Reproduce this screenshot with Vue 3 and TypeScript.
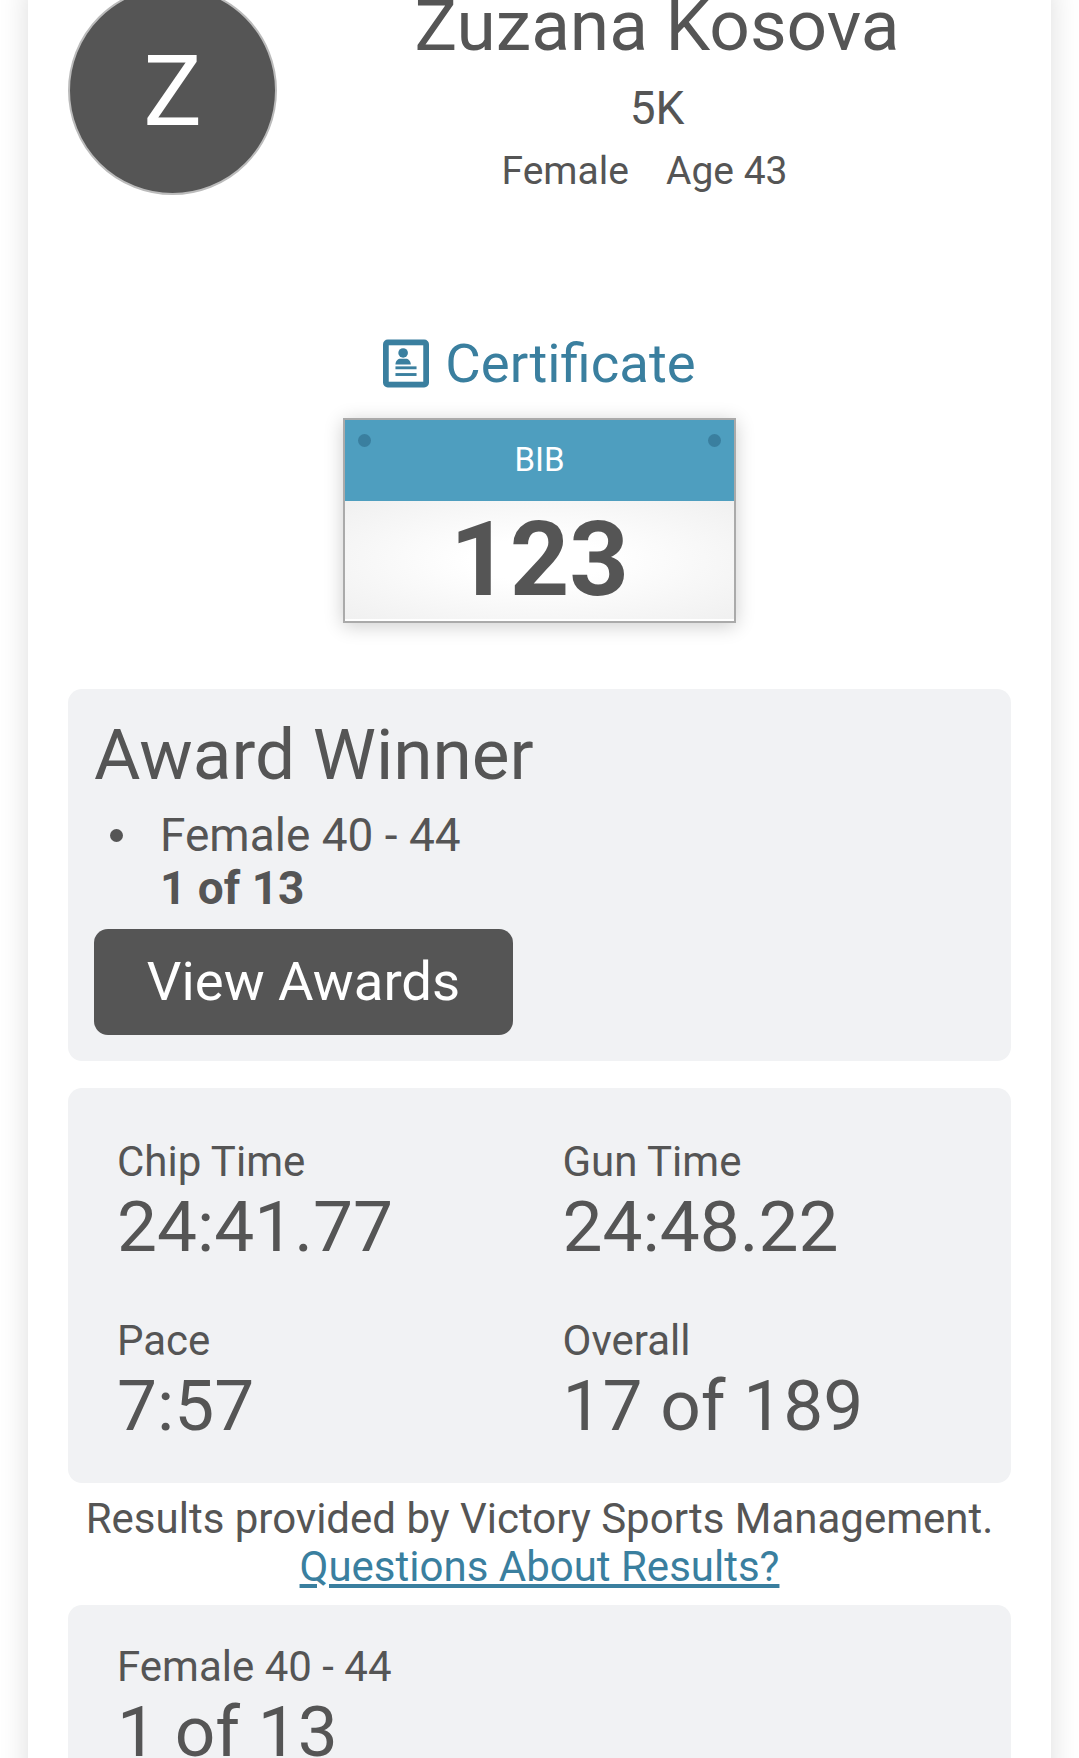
<script setup lang="ts">
interface Stat {
  label: string;
  value: string;
}

// chip/gun/pace/place numbers for this runner
const stats: Stat[] = [
  { label: "Chip Time", value: "24:41.77" },
  { label: "Gun Time", value: "24:48.22" },
  { label: "Pace", value: "7:57" },
  { label: "Overall", value: "17 of 189" },
];

const divisionStats: Stat[] = [{ label: "Female 40 - 44", value: "1 of 13" }];
</script>

<template>
  <div class="page">
    <div class="card">
      <div class="hero">
        <div class="avatar_cell">
          <div class="avatar">Z</div>
        </div>
        <div class="runner">
          <h1 class="runner_name">Zuzana Kosova</h1>
          <div class="runner_race">5K</div>
          <div class="runner_meta">
            <span>Female</span>
            <span>Age 43</span>
          </div>
        </div>
      </div>

      <a class="certificate" href="#">
        <svg class="certificate_icon" viewBox="0 0 48 50" aria-hidden="true">
          <rect x="0" y="0" width="48" height="50" rx="5" fill="#3a7f9f" />
          <rect x="6" y="6" width="36" height="38" fill="#fff" />
          <circle cx="21" cy="14" r="5" fill="#3a7f9f" />
          <path d="M13 26c0-4 3-6 5-6h6c2 0 5 2 5 6z" fill="#3a7f9f" />
          <rect x="13" y="28" width="22" height="3" fill="#3a7f9f" />
          <rect x="13" y="35" width="22" height="3" fill="#3a7f9f" />
        </svg>
        <span>Certificate</span>
      </a>

      <div class="bib">
        <i class="bib_pin bib_pin_left"></i>
        <i class="bib_pin bib_pin_right"></i>
        <div class="bib_head">BIB</div>
        <div class="bib_number">123</div>
      </div>

      <section class="panel award">
        <h2 class="award_title">Award Winner</h2>
        <ul class="award_list">
          <li>Female 40 - 44<br /><strong>1 of 13</strong></li>
        </ul>
        <a class="award_btn" href="#">View Awards</a>
      </section>

      <section class="panel stats">
        <div v-for="stat in stats" :key="stat.label" class="stat">
          <div class="stat_label">{{ stat.label }}</div>
          <div class="stat_value">{{ stat.value }}</div>
        </div>
      </section>

      <p class="provided">
        Results provided by Victory Sports Management.<br />
        <a href="#">Questions About Results?</a>
      </p>

      <section class="panel stats stats_division">
        <div v-for="stat in divisionStats" :key="stat.label" class="stat">
          <div class="stat_label">{{ stat.label }}</div>
          <div class="stat_value">{{ stat.value }}</div>
        </div>
      </section>
    </div>
  </div>
</template>

<style>
html,
body {
  background: #fff;
}
</style>

<style scoped>
.page {
  height: 1758px;
  overflow: hidden;
  padding: 0 28px;
  box-sizing: border-box;
  font-family: Roboto, "Liberation Sans", sans-serif;
  color: #555;
}

.card {
  background: #fff;
  box-shadow: 0 0 28px rgba(0, 0, 0, 0.14);
  padding: 0 40px;
  height: 1800px;
}

.hero {
  display: flex;
  margin-top: -14px;
  height: 315px;
}

.avatar_cell {
  width: 235px;
  flex: none;
}

.avatar {
  width: 209px;
  height: 209px;
  box-sizing: border-box;
  border: 2px solid #bbb;
  border-radius: 50%;
  background: #555;
  color: #fff;
  font-size: 98px;
  line-height: 207px;
  text-align: center;
}

.runner {
  flex: 1;
  text-align: center;
}

.runner_name {
  margin: 0;
  font-size: 71.2px;
  font-weight: 400;
  line-height: 80px;
}

.runner_race {
  font-size: 46px;
  line-height: 60px;
  margin-top: 12px;
}

.runner_meta {
  display: flex;
  justify-content: center;
  gap: 37px;
  font-size: 39px;
  line-height: 50px;
  margin-top: 8px;
  padding-right: 25px;
}

.certificate {
  display: flex;
  justify-content: center;
  align-items: center;
  gap: 16px;
  color: #3a7f9f;
  text-decoration: none;
  font-size: 54.5px;
  line-height: 64px;
  margin-top: 30px;
  height: 64px;
}

.certificate_icon {
  width: 46px;
  height: 49px;
  flex: none;
}

.bib {
  position: relative;
  width: 393px;
  height: 205px;
  box-sizing: border-box;
  margin: 23px auto 0;
  border: 2px solid #aaa;
  background: #fff;
  box-shadow: 0 3px 18px rgba(0, 0, 0, 0.2);
}

.bib_pin {
  position: absolute;
  top: 14px;
  width: 13px;
  height: 13px;
  border-radius: 50%;
  background: #3a7f9f;
}

.bib_pin_left {
  left: 13px;
}

.bib_pin_right {
  right: 13px;
}

.bib_head {
  height: 81px;
  background: #4e9ebf;
  color: #fff;
  font-size: 33px;
  line-height: 79px;
  text-align: center;
}

.bib_number {
  font-size: 104px;
  font-weight: 700;
  line-height: 118px;
  text-align: center;
  background: radial-gradient(ellipse at center, #fff 25%, #f0f0f0 100%);
}

.panel {
  background: #f1f2f4;
  border-radius: 14px;
}

.award {
  margin-top: 66px;
  height: 372px;
  box-sizing: border-box;
  padding: 24px 26px 26px;
}

.award_title {
  margin: 0;
  font-size: 71.2px;
  font-weight: 400;
  line-height: 84px;
}

.award_list {
  margin: 12px 0 0;
  padding-left: 66px;
  font-size: 46px;
  line-height: 53px;
  list-style: none;
}

.award_list li {
  position: relative;
}

/* native marker sits too close to the text at this size */
.award_list li::before {
  content: "";
  position: absolute;
  left: -50px;
  top: 20px;
  width: 13px;
  height: 13px;
  border-radius: 50%;
  background: #555;
}

.award_btn {
  display: block;
  width: 419px;
  height: 106px;
  margin-top: 14px;
  border-radius: 14px;
  background: #555;
  color: #fff;
  font-size: 54.5px;
  line-height: 104px;
  text-align: center;
  text-decoration: none;
}

.stats {
  display: grid;
  grid-template-columns: 1fr 1fr;
  padding: 26px 26px 11px;
  margin-top: 27px;
}

.stats_division {
  padding-top: 14px;
}

.stat {
  padding: 24px 23px 0;
  height: 179px;
  box-sizing: border-box;
}

.stat_label {
  font-size: 42px;
  line-height: 48px;
}

.stat_value {
  font-size: 71.2px;
  line-height: 88px;
  margin-top: -3px;
}

.provided {
  margin: 12px 0 0;
  font-size: 42px;
  line-height: 48px;
  text-align: center;
}

.provided a {
  color: #3a7f9f;
}

.provided + .stats {
  margin-top: 14px;
}
</style>
